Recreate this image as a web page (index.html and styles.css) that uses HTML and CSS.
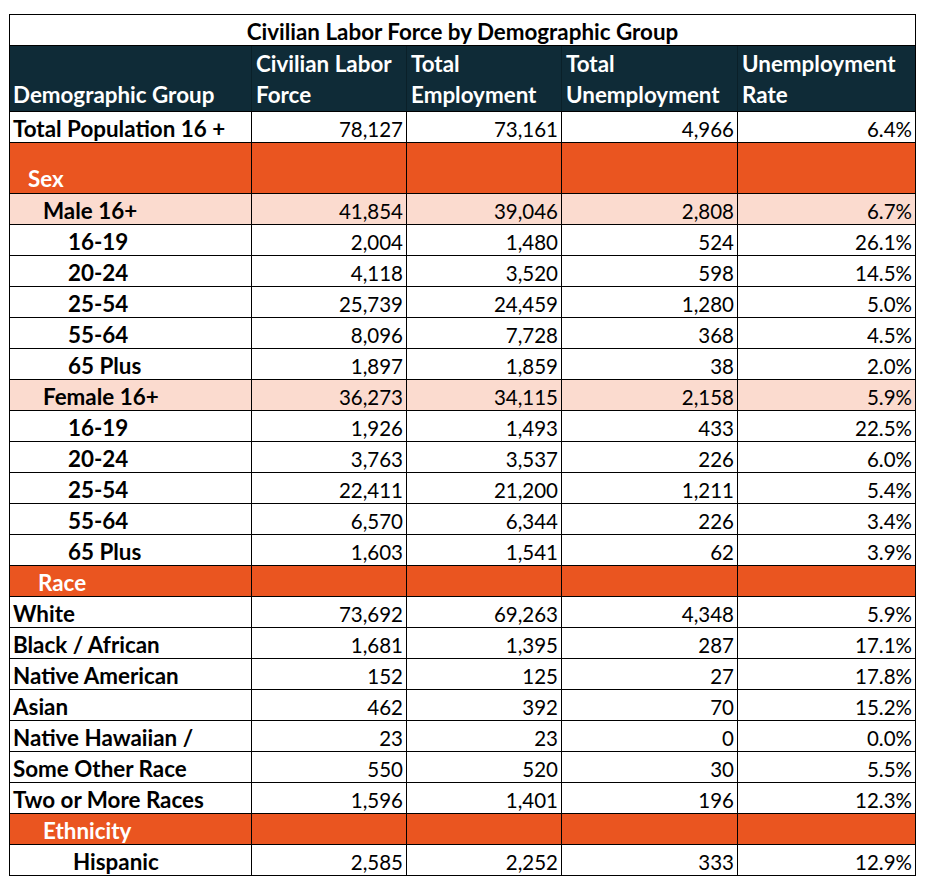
FILE: index.html
```html
<!DOCTYPE html>
<html>
<head>
<meta charset="utf-8">
<link rel="stylesheet" href="styles.css">
</head>
<body>
<div class="wrap">
<table class="clf">
  <colgroup>
    <col class="c1"><col class="c2"><col class="c3"><col class="c4"><col class="c5">
  </colgroup>
  <tr class="title"><td colspan="5">Civilian Labor Force by Demographic Group</td></tr>
  <tr class="head">
    <th>Demographic Group</th>
    <th>Civilian Labor<br>Force</th>
    <th>Total<br>Employment</th>
    <th>Total<br>Unemployment</th>
    <th>Unemployment<br>Rate</th>
  </tr>
  <tr><td class="lbl">Total Population 16 +</td><td>78,127</td><td>73,161</td><td>4,966</td><td>6.4%</td></tr>
  <tr class="sect tall"><td class="lbl i1">Sex</td><td></td><td></td><td></td><td></td></tr>
  <tr class="pink"><td class="lbl i2">Male 16+</td><td>41,854</td><td>39,046</td><td>2,808</td><td>6.7%</td></tr>
  <tr><td class="lbl i3">16-19</td><td>2,004</td><td>1,480</td><td>524</td><td>26.1%</td></tr>
  <tr><td class="lbl i3">20-24</td><td>4,118</td><td>3,520</td><td>598</td><td>14.5%</td></tr>
  <tr><td class="lbl i3">25-54</td><td>25,739</td><td>24,459</td><td>1,280</td><td>5.0%</td></tr>
  <tr><td class="lbl i3">55-64</td><td>8,096</td><td>7,728</td><td>368</td><td>4.5%</td></tr>
  <tr><td class="lbl i3">65 Plus</td><td>1,897</td><td>1,859</td><td>38</td><td>2.0%</td></tr>
  <tr class="pink"><td class="lbl i2">Female 16+</td><td>36,273</td><td>34,115</td><td>2,158</td><td>5.9%</td></tr>
  <tr><td class="lbl i3">16-19</td><td>1,926</td><td>1,493</td><td>433</td><td>22.5%</td></tr>
  <tr><td class="lbl i3">20-24</td><td>3,763</td><td>3,537</td><td>226</td><td>6.0%</td></tr>
  <tr><td class="lbl i3">25-54</td><td>22,411</td><td>21,200</td><td>1,211</td><td>5.4%</td></tr>
  <tr><td class="lbl i3">55-64</td><td>6,570</td><td>6,344</td><td>226</td><td>3.4%</td></tr>
  <tr><td class="lbl i3">65 Plus</td><td>1,603</td><td>1,541</td><td>62</td><td>3.9%</td></tr>
  <tr class="sect"><td class="lbl i1b">Race</td><td></td><td></td><td></td><td></td></tr>
  <tr><td class="lbl">White</td><td>73,692</td><td>69,263</td><td>4,348</td><td>5.9%</td></tr>
  <tr><td class="lbl">Black / African</td><td>1,681</td><td>1,395</td><td>287</td><td>17.1%</td></tr>
  <tr><td class="lbl">Native American</td><td>152</td><td>125</td><td>27</td><td>17.8%</td></tr>
  <tr><td class="lbl">Asian</td><td>462</td><td>392</td><td>70</td><td>15.2%</td></tr>
  <tr><td class="lbl">Native Hawaiian /</td><td>23</td><td>23</td><td>0</td><td>0.0%</td></tr>
  <tr><td class="lbl">Some Other Race</td><td>550</td><td>520</td><td>30</td><td>5.5%</td></tr>
  <tr><td class="lbl">Two or More Races</td><td>1,596</td><td>1,401</td><td>196</td><td>12.3%</td></tr>
  <tr class="sect"><td class="lbl i2">Ethnicity</td><td></td><td></td><td></td><td></td></tr>
  <tr><td class="lbl i4">Hispanic</td><td>2,585</td><td>2,252</td><td>333</td><td>12.9%</td></tr>
</table>
</div>
</body>
</html>
```

FILE: styles.css
```css
html, body {
  margin: 0;
  padding: 0;
  background: #ffffff;
}
.wrap {
  padding: 14px 0 0 9px;
}
.clf {
  border-collapse: collapse;
  table-layout: fixed;
  width: 906px;
  font-family: Lato, "Open Sans", "Liberation Sans", sans-serif;
  font-size: 20.5px;
  color: #000;
}
.c1 { width: 242px; }
.c2 { width: 155px; }
.c3 { width: 155px; }
.c4 { width: 176px; }
.c5 { width: 178px; }

.clf td, .clf th {
  border: 1px solid #000;
  height: 30px;
  padding: 0 3px 0 3px;
  line-height: 26px;
  vertical-align: bottom;
  text-align: right;
  white-space: nowrap;
  overflow: hidden;
}
.clf td.lbl {
  text-align: left;
  font-weight: bold;
  font-size: 22.4px;
}
.title td {
  text-align: center;
  font-weight: bold;
  font-size: 22.4px;
}
.head th {
  background: #0f2b37;
  color: #ffffff;
  text-align: left;
  font-weight: bold;
  font-size: 22.4px;
  height: 64px;
  line-height: 31px;
  padding: 0 3px 1px 4px;
  border-left-color: #0a2029;
  border-right-color: #0a2029;
}
.head th:first-child { border-left-color: #000; padding-left: 3px; }
.head th:last-child { border-right-color: #000; }
.sect td {
  background: #ea5520;
}
.sect td.lbl { color: #ffffff; }
.sect.tall td { height: 49px; padding-bottom: 1px; }
.pink td {
  background: #fbdbcf;
}
.clf td.i1 { padding-left: 18px; }
.clf td.i1b { padding-left: 28px; }
.clf td.i2 { padding-left: 33px; }
.clf td.i3 { padding-left: 58px; }
.clf td.i4 { padding-left: 63px; }
```
